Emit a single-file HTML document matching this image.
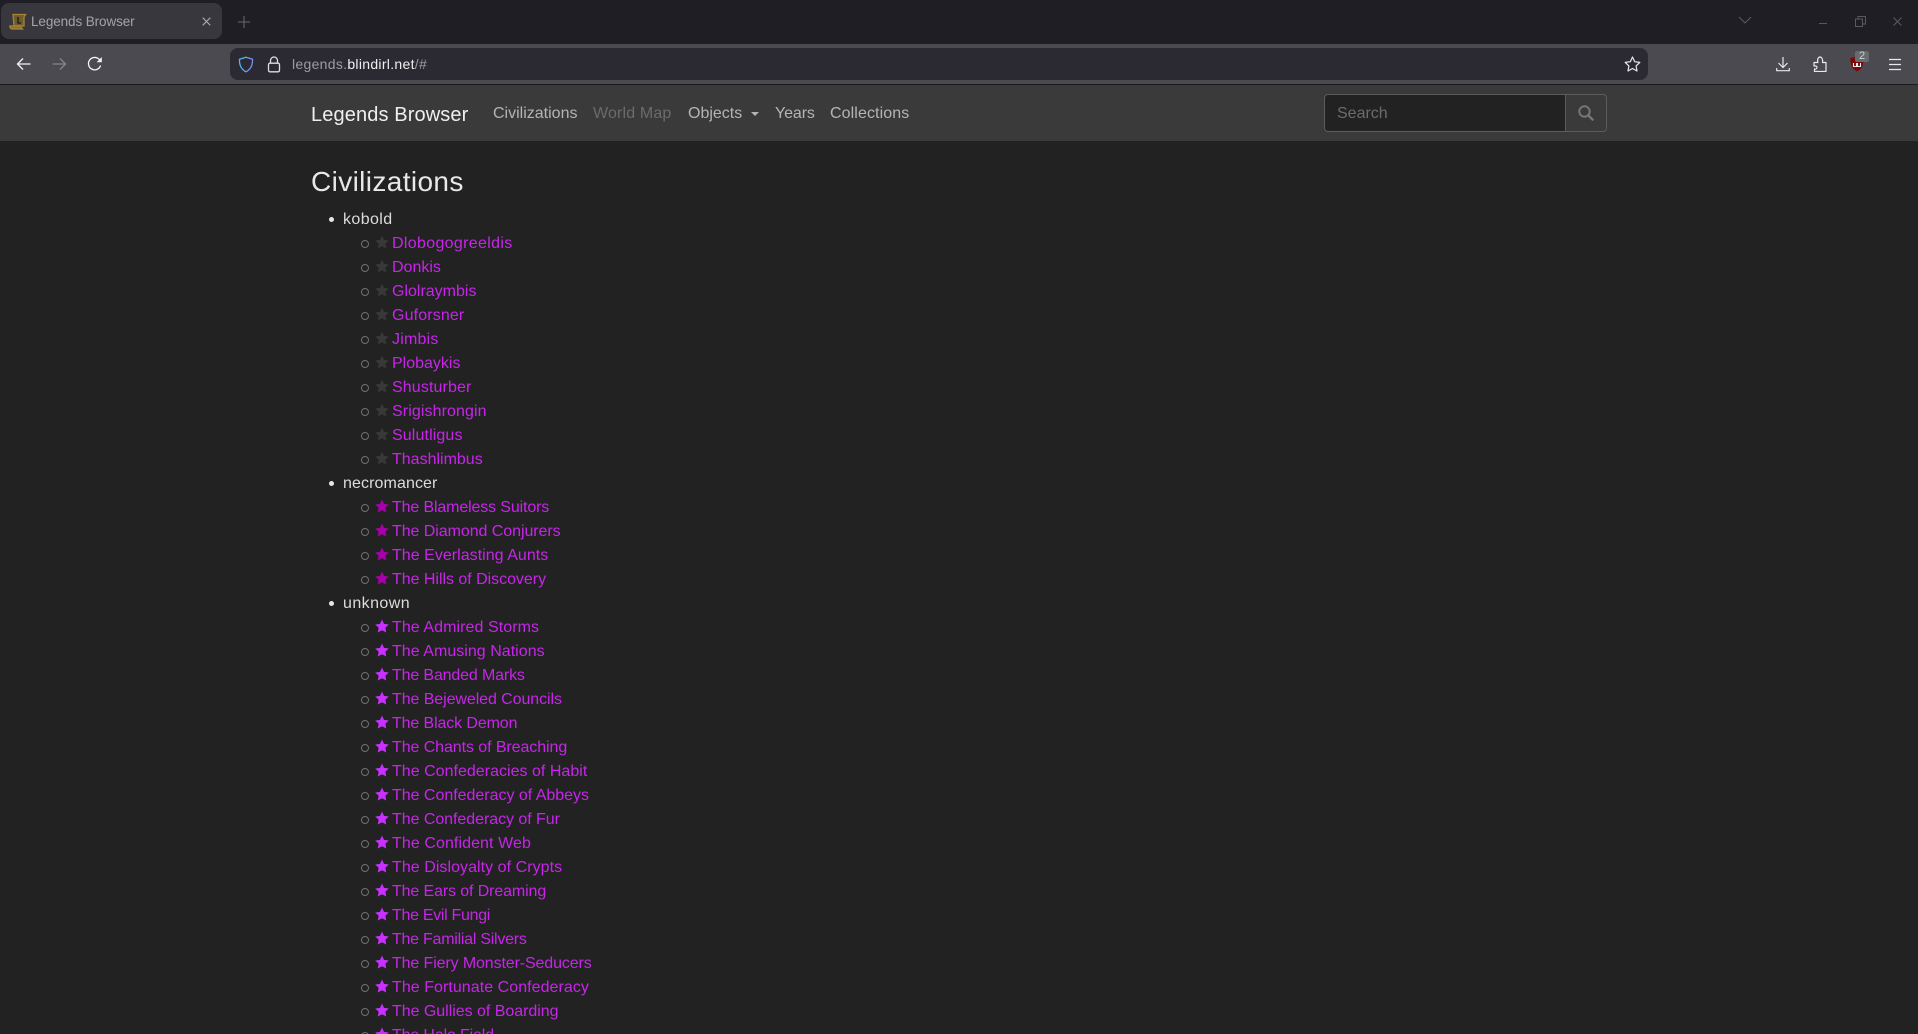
<!DOCTYPE html>
<html><head><meta charset="utf-8"><title>Legends Browser</title>
<style>
*{box-sizing:border-box}
html,body{margin:0;padding:0;width:1918px;height:1034px;overflow:hidden;background:#222;font-family:"Liberation Sans",sans-serif;color:#dee2e6}
#page{position:relative;width:1918px;height:1034px;overflow:hidden;background:#222}
.abs{position:absolute}
.t{position:absolute;white-space:nowrap}
#top{left:0;top:0;width:1918px;height:44px;background:#1f1e25}
#tab{left:1px;top:3px;width:221px;height:36px;background:#38373d;border-radius:8px}
#bar{left:0;top:44px;width:1918px;height:40px;background:#4b4a51}
#sep{left:0;top:84px;width:1918px;height:1px;background:#1c1b20}
#url{left:230px;top:48px;width:1418px;height:32px;background:#2b2a32;border-radius:8px}
#nav{left:0;top:85px;width:1918px;height:56px;background:#3a3a3a}
#search{left:1324px;top:94px;width:242px;height:38px;background:#222;border:1px solid #5c5c5c;border-radius:4px 0 0 4px}
#sbtn{left:1565px;top:94px;width:42px;height:38px;border:1px solid #5c5c5c;border-radius:0 4px 4px 0}
ul{list-style:none;margin:0;padding:0}
#list{position:absolute;left:343px;top:207px;font-size:16px;line-height:24px}
#list li{position:relative;height:24px;white-space:nowrap;color:#dcdcdc}
#list li>span,#list li>a{position:relative;top:1px}
#list li.c:before{content:"";position:absolute;left:-14px;top:10px;width:5px;height:5px;border-radius:50%;background:#e6e6e6}
#list li.s{padding-left:49px}
#list li.s:before{content:"";position:absolute;left:18px;top:9px;width:6px;height:6px;border-radius:50%;border:1px solid #707070}
#list li.s svg{position:absolute;left:31.500px;top:4px;width:14px;height:14px}
#list a{color:#c824ec;text-decoration:none}
</style></head><body><div id="page">
<div class="abs" id="top"></div>
<div class="abs" id="tab"></div>
<svg class="abs" style="left:9px;top:13px" width="18" height="17" viewBox="0 0 18 17"><path d="M4 1.500h12.500c-1 1-1.500 2-1.500 3v8.500H5z" fill="#6e5a2c" stroke="#a58636" stroke-width="1.300"/><path d="M.8 13h11c.3 1.300.8 2.200 1.700 3H2.500C1.500 15.500 1 14.500.8 13z" fill="#8a7030" stroke="#a58636" stroke-width="1.200"/><path d="M9 4v6h3" stroke="#1e1a10" stroke-width="1.300" fill="none"/></svg>
<div class="t" style="left:31px;top:13px;font-size:13.500px;line-height:17px;color:#a3a3a8;letter-spacing:-.1px">Legends Browser</div>
<svg class="abs" style="left:201.500px;top:16.500px" width="9" height="9" viewBox="0 0 9 9"><path d="M.7.7l7.600 7.600M8.300.7L.7 8.300" stroke="#a8a8ab" stroke-width="1.100"/></svg>
<svg class="abs" style="left:238px;top:16px" width="12" height="12" viewBox="0 0 12 12"><path d="M6 0v12M0 6h12" stroke="#66656b" stroke-width="1.100"/></svg>
<svg class="abs" style="left:1738px;top:16px" width="14" height="9" viewBox="0 0 14 9"><path d="M1 1l6 6 6-6" stroke="#5a595f" stroke-width="1.100" fill="none"/></svg>
<div class="abs" style="left:1819px;top:23px;width:8px;height:1px;background:#5a595f"></div>
<svg class="abs" style="left:1855px;top:16px" width="11" height="11" viewBox="0 0 11 11"><path d="M.5 3h7v7.500h-7zM3 3V.5h7.500V8H8" stroke="#5a595f" fill="none"/></svg>
<svg class="abs" style="left:1893px;top:17px" width="9" height="9" viewBox="0 0 9 9"><path d="M.5.5l8 8M8.500.5l-8 8" stroke="#5a595f" stroke-width="1.100"/></svg>

<div class="abs" id="bar"></div><div class="abs" id="sep"></div><div class="abs" id="url"></div>
<svg class="abs" style="left:16px;top:57px" width="15" height="14" viewBox="0 0 15 14"><path d="M14.500 7H1.500M7 1.500L1.500 7 7 12.500" stroke="#f4f4f6" stroke-width="1.300" fill="none"/></svg>
<svg class="abs" style="left:52px;top:57px" width="15" height="14" viewBox="0 0 15 14"><path d="M.5 7h13M8 1.500L13.500 7 8 12.500" stroke="#85848a" stroke-width="1.300" fill="none"/></svg>
<svg class="abs" style="left:87px;top:56px" width="16" height="16" viewBox="0 0 16 16"><path d="M13.600 9.500A6.200 6.200 0 1 1 12.300 3.500L14 5" stroke="#f4f4f6" stroke-width="1.300" fill="none"/><path d="M14.800 1v5.200H9.600z" fill="#f4f4f6"/></svg>
<svg class="abs" style="left:238px;top:56px" width="16" height="17" viewBox="0 0 16 17"><defs><linearGradient id="g" x1="0" y1="0" x2="1" y2="0"><stop offset="0" stop-color="#4fb8f0"/><stop offset="1" stop-color="#7d8cf0"/></linearGradient></defs><path d="M8 1.200L14.500 3.200C14.800 9 12.500 13.500 8 15.800 3.500 13.500 1.200 9 1.500 3.200z" stroke="url(#g)" stroke-width="1.300" fill="none"/></svg>
<svg class="abs" style="left:267px;top:56px" width="14" height="17" viewBox="0 0 14 17"><path d="M3.500 7V4.500a3.500 3.500 0 0 1 7 0V7" stroke="#dedee0" stroke-width="1.300" fill="none"/><rect x="1.500" y="7.200" width="11" height="8.600" rx="1.500" stroke="#dedee0" stroke-width="1.300" fill="none"/></svg>
<div class="t" style="left:292px;top:55px;font-size:14px;line-height:18px;color:#9c9ca0;letter-spacing:.3px">legends.<span style="color:#eeeef0">blindirl.net</span>/#</div>
<svg class="abs" style="left:1624px;top:56px" width="17" height="16" viewBox="0 0 17 16"><path d="M8.500 1l2.200 4.700 5.100.7-3.700 3.500.9 5.100-4.500-2.500L4 15l.9-5.100L1.200 6.400l5.100-.7z" stroke="#e8e8ea" stroke-width="1.200" fill="none" stroke-linejoin="round"/></svg>
<svg class="abs" style="left:1776px;top:56px" width="14" height="16" viewBox="0 0 14 16"><path d="M7 1v10M2.500 7L7 11.500 11.500 7M.7 12v2.700h12.600V12" stroke="#e8e8ea" stroke-width="1.200" fill="none"/></svg>
<svg class="abs" style="left:1812px;top:56px" width="15" height="16" viewBox="0 0 15 16"><path d="M14 15.500H2.500V13c2 .5 2.500-1 2.500-1.700S4 9.500 2 10V6.500H6C5 4.500 6 1 8 1s3 3 2.500 5.500H14z" stroke="#e8e8ea" stroke-width="1.200" fill="none" stroke-linejoin="round"/></svg>
<svg class="abs" style="left:1850px;top:56px" width="14" height="16" viewBox="0 0 14 16"><path d="M.5 2L7 .8 13.500 2c.3 6.500-1.500 11-6.500 13.500C2 13 .2 8.500.5 2z" fill="#7d0606"/><path d="M3.500 7v3.500h3V7M7.500 7v3.500h3V7" stroke="#eee" stroke-width="1.100" fill="none"/></svg>
<div class="abs" style="left:1855px;top:51px;width:14px;height:11px;background:#6a6a6a;border-radius:2px"></div>
<div class="t" style="left:1859px;top:51px;font-size:11px;line-height:11px;color:#bcd4e8">2</div>
<svg class="abs" style="left:1889px;top:58px" width="12" height="13" viewBox="0 0 12 13"><path d="M0 1.500h12M0 6.500h12M0 11.500h12" stroke="#e8e8ea" stroke-width="1.200"/></svg>

<div class="abs" id="nav"></div>
<div class="t" style="left:311px;top:101.500px;font-size:20px;line-height:26px;color:#efefef;letter-spacing:.12px">Legends Browser</div>
<div class="t" style="left:493px;top:102px;font-size:16px;line-height:24px;color:#b4b4b4">Civilizations</div>
<div class="t" style="left:593px;top:102px;font-size:16px;line-height:24px;color:#6b6b6b;letter-spacing:.15px">World Map</div>
<div class="t" style="left:688px;top:102px;font-size:16px;line-height:24px;color:#b4b4b4">Objects</div>
<div class="abs" style="left:751px;top:112px;border:4px solid transparent;border-top-color:#b4b4b4;border-bottom:0"></div>
<div class="t" style="left:775px;top:102px;font-size:16px;line-height:24px;color:#b4b4b4;letter-spacing:-.1px">Years</div>
<div class="t" style="left:830px;top:102px;font-size:16px;line-height:24px;color:#b4b4b4;letter-spacing:.1px">Collections</div>
<div class="abs" id="search"></div>
<div class="t" style="left:1337px;top:102px;font-size:16px;line-height:24px;color:#6c6c6c">Search</div>
<div class="abs" id="sbtn"></div>
<svg class="abs" style="left:1578px;top:105px" width="17" height="17" viewBox="0 0 17 17"><circle cx="6.500" cy="6.500" r="5.200" stroke="#767676" stroke-width="2" fill="none"/><path d="M10.300 10.300l5 5" stroke="#767676" stroke-width="2.400"/></svg>

<div class="t" style="left:311px;top:164px;font-size:28px;line-height:36px;color:#e8e8e8;letter-spacing:.38px">Civilizations</div>

<svg width="0" height="0" style="position:absolute"><defs><path id="st" d="M7 .5l2 4.400 4.800.6-3.500 3.300.9 4.700L7 11.200 2.800 13.500l.9-4.700L.2 5.500 5 4.900z"/></defs></svg>
<ul id="list">
<li class="c"><span style="letter-spacing:.4px">kobold</span></li>
<li class="s"><svg viewBox="0 0 14 14"><use href="#st" fill="#383838"/></svg><a style="letter-spacing:.33px">Dlobogogreeldis</a></li>
<li class="s"><svg viewBox="0 0 14 14"><use href="#st" fill="#383838"/></svg><a>Donkis</a></li>
<li class="s"><svg viewBox="0 0 14 14"><use href="#st" fill="#383838"/></svg><a>Glolraymbis</a></li>
<li class="s"><svg viewBox="0 0 14 14"><use href="#st" fill="#383838"/></svg><a style="letter-spacing:.14px">Guforsner</a></li>
<li class="s"><svg viewBox="0 0 14 14"><use href="#st" fill="#383838"/></svg><a style="letter-spacing:.2px">Jimbis</a></li>
<li class="s"><svg viewBox="0 0 14 14"><use href="#st" fill="#383838"/></svg><a>Plobaykis</a></li>
<li class="s"><svg viewBox="0 0 14 14"><use href="#st" fill="#383838"/></svg><a style="letter-spacing:.12px">Shusturber</a></li>
<li class="s"><svg viewBox="0 0 14 14"><use href="#st" fill="#383838"/></svg><a style="letter-spacing:.1px">Srigishrongin</a></li>
<li class="s"><svg viewBox="0 0 14 14"><use href="#st" fill="#383838"/></svg><a style="letter-spacing:.12px">Sulutligus</a></li>
<li class="s"><svg viewBox="0 0 14 14"><use href="#st" fill="#383838"/></svg><a>Thashlimbus</a></li>
<li class="c"><span style="letter-spacing:.1px">necromancer</span></li>
<li class="s"><svg viewBox="0 0 14 14"><use href="#st" fill="#a800a8"/></svg><a style="letter-spacing:-.14px">The Blameless Suitors</a></li>
<li class="s"><svg viewBox="0 0 14 14"><use href="#st" fill="#a800a8"/></svg><a style="letter-spacing:-.06px">The Diamond Conjurers</a></li>
<li class="s"><svg viewBox="0 0 14 14"><use href="#st" fill="#a800a8"/></svg><a style="letter-spacing:.03px">The Everlasting Aunts</a></li>
<li class="s"><svg viewBox="0 0 14 14"><use href="#st" fill="#a800a8"/></svg><a style="letter-spacing:-.03px">The Hills of Discovery</a></li>
<li class="c"><span style="letter-spacing:.43px">unknown</span></li>
<li class="s"><svg viewBox="0 0 14 14"><use href="#st" fill="#c832ff"/></svg><a style="letter-spacing:.07px">The Admired Storms</a></li>
<li class="s"><svg viewBox="0 0 14 14"><use href="#st" fill="#c832ff"/></svg><a style="letter-spacing:.03px">The Amusing Nations</a></li>
<li class="s"><svg viewBox="0 0 14 14"><use href="#st" fill="#c832ff"/></svg><a style="letter-spacing:-.15px">The Banded Marks</a></li>
<li class="s"><svg viewBox="0 0 14 14"><use href="#st" fill="#c832ff"/></svg><a style="letter-spacing:-.08px">The Bejeweled Councils</a></li>
<li class="s"><svg viewBox="0 0 14 14"><use href="#st" fill="#c832ff"/></svg><a style="letter-spacing:-.12px">The Black Demon</a></li>
<li class="s"><svg viewBox="0 0 14 14"><use href="#st" fill="#c832ff"/></svg><a style="letter-spacing:-.08px">The Chants of Breaching</a></li>
<li class="s"><svg viewBox="0 0 14 14"><use href="#st" fill="#c832ff"/></svg><a style="letter-spacing:.02px">The Confederacies of Habit</a></li>
<li class="s"><svg viewBox="0 0 14 14"><use href="#st" fill="#c832ff"/></svg><a style="letter-spacing:-.02px">The Confederacy of Abbeys</a></li>
<li class="s"><svg viewBox="0 0 14 14"><use href="#st" fill="#c832ff"/></svg><a style="letter-spacing:-.05px">The Confederacy of Fur</a></li>
<li class="s"><svg viewBox="0 0 14 14"><use href="#st" fill="#c832ff"/></svg><a style="letter-spacing:.08px">The Confident Web</a></li>
<li class="s"><svg viewBox="0 0 14 14"><use href="#st" fill="#c832ff"/></svg><a style="letter-spacing:.05px">The Disloyalty of Crypts</a></li>
<li class="s"><svg viewBox="0 0 14 14"><use href="#st" fill="#c832ff"/></svg><a style="letter-spacing:-.12px">The Ears of Dreaming</a></li>
<li class="s"><svg viewBox="0 0 14 14"><use href="#st" fill="#c832ff"/></svg><a style="letter-spacing:-.3px">The Evil Fungi</a></li>
<li class="s"><svg viewBox="0 0 14 14"><use href="#st" fill="#c832ff"/></svg><a style="letter-spacing:-.25px">The Familial Silvers</a></li>
<li class="s"><svg viewBox="0 0 14 14"><use href="#st" fill="#c832ff"/></svg><a style="letter-spacing:-.12px">The Fiery Monster-Seducers</a></li>
<li class="s"><svg viewBox="0 0 14 14"><use href="#st" fill="#c832ff"/></svg><a style="letter-spacing:.05px">The Fortunate Confederacy</a></li>
<li class="s"><svg viewBox="0 0 14 14"><use href="#st" fill="#c832ff"/></svg><a style="letter-spacing:-.03px">The Gullies of Boarding</a></li>
<li class="s"><svg viewBox="0 0 14 14"><use href="#st" fill="#c832ff"/></svg><a style="letter-spacing:-.15px">The Halo Field</a></li>
</ul>
</div></body></html>
